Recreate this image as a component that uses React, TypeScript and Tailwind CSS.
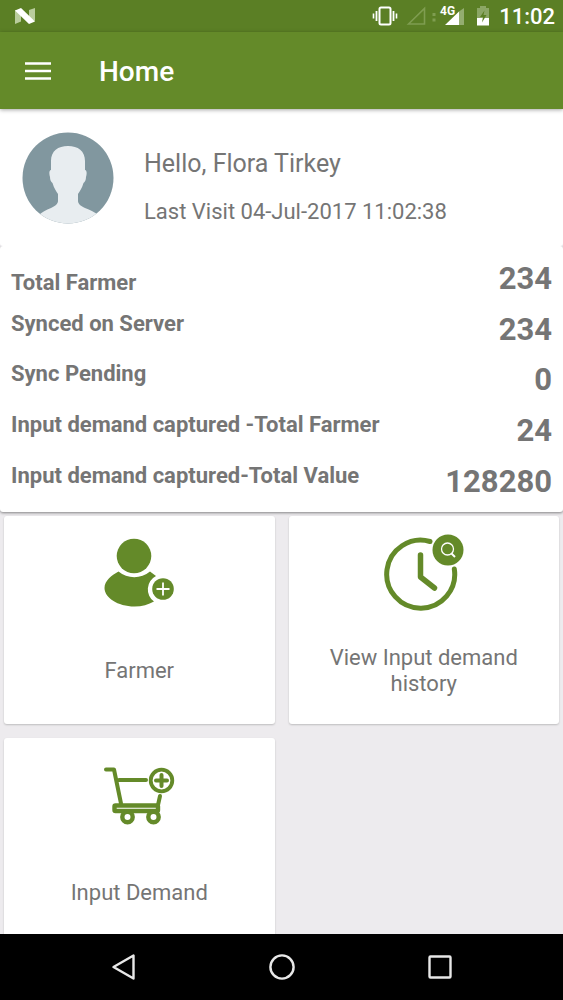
import type { ReactNode } from "react";

const stats = [
  { label: "Total Farmer", value: "234" },
  { label: "Synced on Server", value: "234" },
  { label: "Sync Pending", value: "0" },
  { label: "Input demand captured -Total Farmer", value: "24" },
  { label: "Input demand captured-Total Value", value: "128280" },
];

function StatusBar() {
  return (
    <div className="flex h-8 shrink-0 items-center justify-between bg-[#5b7f25] pr-2 pl-[14px] text-white">
      <svg width="22" height="18" viewBox="0 0 22 18" aria-hidden="true">
        <path d="M1 3v14l6-2.500V6zM15 3l6-2v13l-6-2z" fill="#b9cc9c" />
        <path d="M1 3.500 7 1 21 14.500 15 17z" fill="#fff" />
      </svg>
      <div className="flex items-center">
        <svg width="26" height="20" viewBox="0 0 26 20" fill="none" stroke="#fff" aria-hidden="true">
          <rect x="7.500" y="1.500" width="11" height="17" rx="1.500" strokeWidth="2" />
          <path d="M4.500 5v10M21.500 5v10" strokeWidth="1.800" />
          <path d="M1.500 7.500v5M24.500 7.500v5" strokeWidth="1.600" />
        </svg>
        <svg className="ml-2" width="60" height="24" viewBox="0 0 60 24" aria-hidden="true">
          <path d="M2.500 20 18.500 4.500V20z" fill="none" stroke="#7f9d50" strokeWidth="1.600" />
          <path d="M26.500 9h3v3h-3zM26.500 14.500h3v3h-3z" fill="#7f9d50" />
          <path d="M53 7.500 58 4v17H53z" fill="#94ad70" />
          <path d="M39 21 53 7.500V21z" fill="#fff" />
          <text x="34" y="11" fill="#fff" fontFamily="Roboto, sans-serif" fontSize="12" fontWeight="700">
            4G
          </text>
        </svg>
        <svg className="ml-[10px]" width="14" height="20" viewBox="0 0 14 20" aria-hidden="true">
          <path d="M4 0h6v2h3v10H1V2h3z" fill="#8ba665" />
          <path d="M1 12h12v7.500H1z" fill="#fff" />
          <path d="M8.500 4.500 4 11h3l-1 5.500L10.500 9H7.500z" fill="#5b7f25" />
        </svg>
        <span className="ml-[9px] pt-[2px] text-[22px] leading-[30px] font-medium">11:02</span>
      </div>
    </div>
  );
}

function Avatar() {
  return (
    <svg className="size-[92px] shrink-0" viewBox="0 0 92 92" role="img" aria-label="Profile">
      <defs>
        <clipPath id="avatar-circle">
          <circle cx="46" cy="46" r="45.500" />
        </clipPath>
      </defs>
      <g clipPath="url(#avatar-circle)">
        <rect width="92" height="92" fill="#81979f" />
        <path
          d="M46 14c-10 0-17 5-17 15v9c-2 0-2 4-1 7 0 3 1 5 2.500 6 1.500 5 3.500 8 5.500 11v7c0 3-3 5-7 7-5 2-9 4-13 8v12h61V84c-4-4-9-6-14-8-4-2-7-4-7-7v-7c2-3 4-6 5.500-11 1.500-1 2.500-3 2.500-6 1-3 1-7-1-7v-9c0-10-7-15-17-15z"
          fill="#e8edf0"
        />
      </g>
    </svg>
  );
}

function FarmerIcon() {
  return (
    <svg width="72" height="70" viewBox="0 0 72 70" aria-hidden="true">
      <circle cx="31" cy="18" r="17.300" fill="#648a29" />
      <path d="M15.500 33.500C9 37 1.500 42.500 1.500 50c0 9.500 13 18.500 30 18.500 7.500 0 14-2 19.500-5a15 15 0 0 1 2-25.500l-6-4.500c-9 7.500-22.500 7.500-31.500 0z" fill="#648a29" />
      <circle cx="60" cy="51" r="10.800" fill="#648a29" />
      <path d="M60 44.500v13M53.500 51h13" stroke="#fff" strokeWidth="1.800" />
    </svg>
  );
}

function HistoryIcon() {
  return (
    <svg width="80" height="78" viewBox="0 0 80 78" fill="none" aria-hidden="true">
      <path d="M46 7.500A34 34 0 1 0 70.300 35" stroke="#648a29" strokeWidth="5" strokeLinecap="round" />
      <path d="M36.500 21v22l14 11" stroke="#648a29" strokeWidth="5.500" strokeLinecap="round" strokeLinejoin="round" />
      <circle cx="64" cy="16" r="15.500" fill="#648a29" />
      <circle cx="63.500" cy="15" r="6" stroke="#fff" strokeWidth="1.300" />
      <path d="m67.500 19.500 3.500 3.500" stroke="#fff" strokeWidth="2" />
    </svg>
  );
}

function CartIcon() {
  return (
    <svg width="72" height="60" viewBox="0 0 72 60" fill="none" stroke="#648a29" strokeWidth="4" strokeLinecap="round" strokeLinejoin="round" aria-hidden="true">
      <path d="M3 4.500h8l7 34M16 15h27M57 31l-2 9" />
      <rect x="11.500" y="40.500" width="43.500" height="5.500" rx="1" strokeWidth="4.400" />
      <circle cx="24.500" cy="52" r="5.200" fill="#fff" strokeWidth="4.400" />
      <circle cx="50.500" cy="52" r="5.200" fill="#fff" strokeWidth="4.400" />
      <circle cx="58.500" cy="15.500" r="10.800" strokeWidth="3.800" />
      <path d="M58.500 10v11M53 15.500h11" />
    </svg>
  );
}

function Tile({ icon, children }: { icon: ReactNode; children: ReactNode }) {
  return (
    <button
      type="button"
      className="flex h-[208px] flex-col items-center rounded-[3px] bg-white pt-[17px] text-[22px] leading-[26px] text-[#757575] shadow-[0_1px_2px_rgba(0,0,0,0.2)]"
    >
      <span className="flex h-20 items-center justify-center">{icon}</span>
      <span className="flex flex-1 items-center justify-center px-5 pt-1">{children}</span>
    </button>
  );
}

export default function App() {
  return (
    <div className="flex h-screen flex-col overflow-hidden bg-[#edebee] font-[Roboto,sans-serif]">
      <StatusBar />
      <header className="z-10 flex h-[77px] shrink-0 items-center bg-[#648a29] px-6 pt-[3px] text-white shadow-[0_1px_4px_rgba(0,0,0,0.35)]">
        <button type="button" aria-label="Open menu" className="flex h-12 w-[27px] items-center">
          <svg width="27" height="20" viewBox="0 0 27 20" stroke="#fff" strokeWidth="2.600" aria-hidden="true">
            <path d="M1 1.500h26M1 9h26M1 16.500h26" />
          </svg>
        </button>
        <h1 className="ml-12 text-[28px] leading-8 font-medium">Home</h1>
      </header>

      <main className="min-h-0 flex-1 overflow-y-auto [scrollbar-width:none]">
        <section className="relative z-[1] flex h-[137px] items-center gap-[30px] rounded-b-[3px] bg-white px-[22px] text-[#757575]">
          <Avatar />
          <div className="flex flex-col gap-[18px] pt-5">
            <p className="text-[25px] leading-[30px]">Hello, Flora Tirkey</p>
            <p className="text-[22px] leading-[30px]">Last Visit 04-Jul-2017 11:02:38</p>
          </div>
        </section>

        <section className="rounded-[3px] bg-white px-[11px] pt-2 pb-[5px] shadow-[0_1px_3px_rgba(0,0,0,0.45)]">
          <dl className="grid min-h-[253px] auto-rows-fr font-bold text-[#757575]">
            {stats.map(({ label, value }, index) => (
              <div key={label} className="flex items-center justify-between">
                <dt className={index === 0 ? "pt-2 text-[22px] leading-[26px]" : "pb-3 text-[22px] leading-[26px]"}>
                  {label}
                </dt>
                <dd className="text-[31px] leading-10">{value}</dd>
              </div>
            ))}
          </dl>
        </section>

        <section className="grid grid-cols-2 gap-[14px] px-1 pt-1 pb-3">
          <Tile icon={<FarmerIcon />}>Farmer</Tile>
          <Tile icon={<HistoryIcon />}>View Input demand history</Tile>
          <Tile icon={<CartIcon />}>Input Demand</Tile>
        </section>
      </main>

      <nav aria-label="System" className="flex h-[66px] shrink-0 items-center justify-center gap-[130px] bg-black">
        <button type="button" aria-label="Back">
          <svg width="28" height="28" viewBox="0 0 28 28" fill="none" stroke="#e8e8e8" strokeWidth="2.400" strokeLinejoin="round" aria-hidden="true">
            <path d="M3.500 14 23.500 2.500v23z" />
          </svg>
        </button>
        <button type="button" aria-label="Home">
          <svg width="28" height="28" viewBox="0 0 28 28" fill="none" stroke="#e8e8e8" strokeWidth="2.400" aria-hidden="true">
            <circle cx="14" cy="14" r="11.600" />
          </svg>
        </button>
        <button type="button" aria-label="Recent apps">
          <svg width="28" height="28" viewBox="0 0 28 28" fill="none" stroke="#e8e8e8" strokeWidth="2.400" aria-hidden="true">
            <rect x="3.500" y="3.500" width="21" height="21" rx="1" />
          </svg>
        </button>
      </nav>
    </div>
  );
}
